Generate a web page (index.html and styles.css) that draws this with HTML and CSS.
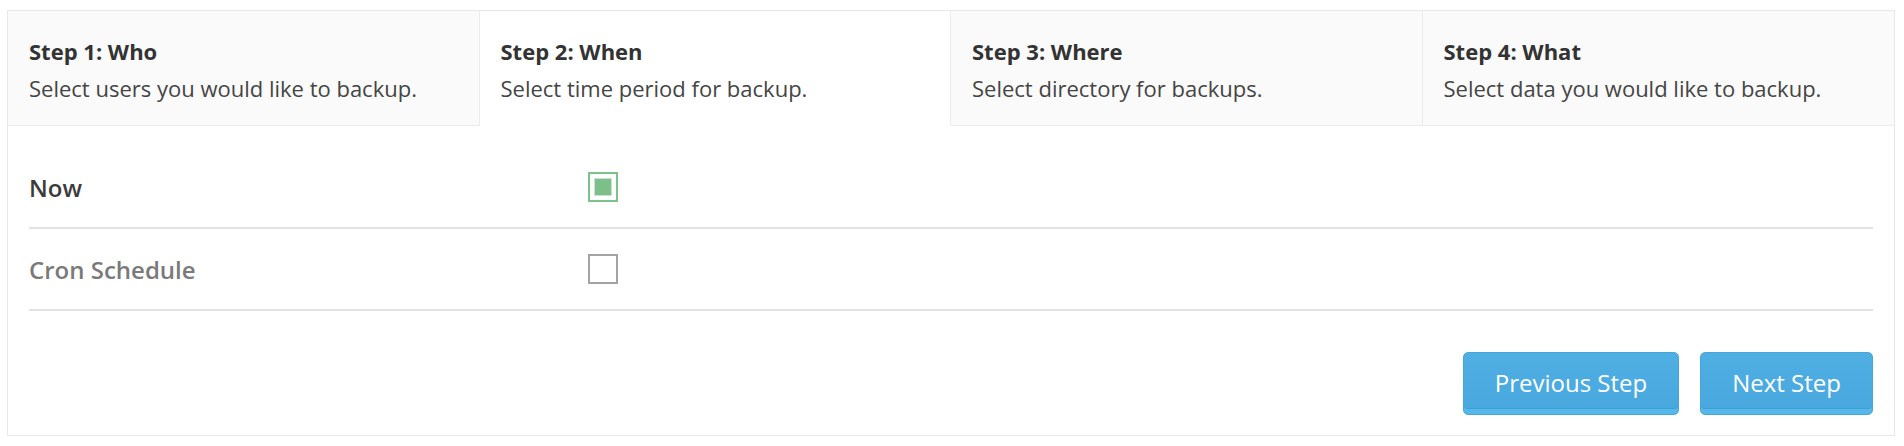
FILE: index.html
```html
<!DOCTYPE html>
<html lang="en">
<head>
<meta charset="utf-8">
<title>Backup Wizard</title>
<link rel="stylesheet" href="styles.css">
</head>
<body>
<div class="wizard">
  <ul class="steps">
    <li class="step">
      <div class="step-title">Step 1: Who</div>
      <div class="step-desc">Select users you would like to backup.</div>
    </li>
    <li class="step active">
      <div class="step-title">Step 2: When</div>
      <div class="step-desc">Select time period for backup.</div>
    </li>
    <li class="step">
      <div class="step-title">Step 3: Where</div>
      <div class="step-desc">Select directory for backups.</div>
    </li>
    <li class="step">
      <div class="step-title">Step 4: What</div>
      <div class="step-desc">Select data you would like to backup.</div>
    </li>
  </ul>
  <div class="wizard-body">
    <div class="option-row">
      <span class="option-label selected">Now</span>
      <span class="check checked"><span class="check-mark"></span></span>
    </div>
    <div class="option-row">
      <span class="option-label">Cron Schedule</span>
      <span class="check"></span>
    </div>
    <div class="actions">
      <button class="btn">Previous Step</button>
      <button class="btn">Next Step</button>
    </div>
  </div>
</div>
</body>
</html>
```

FILE: styles.css
```css
* { box-sizing: border-box; }

body {
  margin: 10px 9px 10px 7px;
  font-family: "Open Sans", "DejaVu Sans", sans-serif;
  background: #ffffff;
  color: #333;
}

.wizard {
  border: 1px solid #e8e8e8;
  background: #fff;
}

.steps {
  list-style: none;
  margin: 0;
  padding: 0;
  display: grid;
  grid-template-columns: repeat(4, 1fr);
}

.step {
  background: #fafafa;
  border-right: 1px solid #ececec;
  border-bottom: 1px solid #ececec;
  padding: 22px 21px 18px;
  font-size: 22px;
  line-height: 37px;
  color: #3a3a3a;
}

.step:last-child { border-right: none; }

.step.active {
  background: #fff;
  border-bottom-color: #fff;
}

.step-title {
  font-weight: 700;
  color: #333;
}

.step-desc {
  color: #454545;
}

.wizard-body {
  padding: 21px 21px 20px;
}

.option-row {
  display: flex;
  align-items: center;
  height: 82px;
  border-bottom: 2px solid #e2e2e2;
}

.option-label {
  width: 559px;
  font-size: 24px;
  font-weight: 600;
  color: #7a7a7a;
}

.option-label.selected { color: #3c3c3c; }

.check {
  width: 30px;
  height: 30px;
  border: 2px solid #a3a3a3;
  display: flex;
  align-items: center;
  justify-content: center;
  background: #fff;
}

.check.checked {
  border-color: #7cc28b;
}

.check-mark {
  width: 16px;
  height: 16px;
  background: #7cbf88;
  box-shadow: 0 0 0 1px #c6e5cc;
}

.actions {
  display: flex;
  justify-content: flex-end;
  gap: 21px;
  margin-top: 41px;
}

.btn {
  height: 63px;
  padding: 0 31px 3px;
  font-family: "Open Sans", "DejaVu Sans", sans-serif;
  font-size: 24px;
  color: #fff;
  background: linear-gradient(#4faee2, #48a8de);
  border: 1px solid #45a6dc;
  border-radius: 5px;
  box-shadow: inset 0 -5px 0 #56b8ea, inset 0 -6px 0 #3f9fd5;
  cursor: pointer;
}
```
